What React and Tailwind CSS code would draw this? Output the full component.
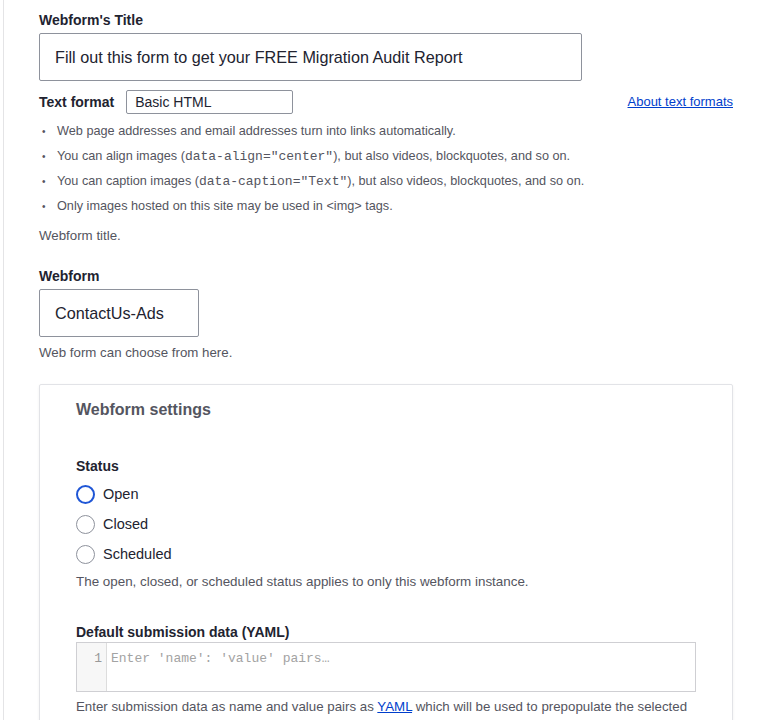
import React from 'react'

const sans = { fontFamily: '"Liberation Sans", Arial, sans-serif' }
const mono = { fontFamily: '"Liberation Mono", "Courier New", monospace' }

function Radio({ label, focused }) {
  return (
    <label className="flex items-center h-[30px] gap-[8px] text-[14.5px] text-[#222330]">
      <span
        className={
          focused
            ? 'w-[19px] h-[19px] rounded-full border-2 border-[#1f56d6] bg-white'
            : 'w-[19px] h-[19px] rounded-full border border-[#8e929c] bg-white'
        }
      />
      <span>{label}</span>
    </label>
  )
}

const Bullet = ({ children }) => (
  <li className="flex items-center h-[25px] text-[12.7px] text-[#545560]">
    <span className="w-[18px] pl-[3px] text-[10px] text-[#545560]">•</span>
    <span>{children}</span>
  </li>
)

const Code = ({ children }) => (
  <code className="text-[13px] text-[#545560]" style={mono}>
    {children}
  </code>
)

export default function App() {
  return (
    <div className="min-h-screen bg-white ml-[3px] border-l border-[#e4e4e6]" style={sans}>
      <div className="pl-[35px] pr-[34px] pt-[11px]">
        {/* Title */}
        <div className="text-[14px] font-bold text-[#222330] leading-[18px]">Webform's Title</div>
        <div className="mt-[4px] w-[543px] h-[48px] border border-[#8e929c] rounded-[2px] flex items-center px-[15px] text-[16.2px] text-[#222330]">
          Fill out this form to get your FREE Migration Audit Report
        </div>

        {/* Text format */}
        <div className="mt-[9px] flex items-center justify-between">
          <div className="flex items-center gap-[12px]">
            <span className="text-[14px] font-bold text-[#222330]">Text format</span>
            <div className="w-[167px] h-[24px] border border-[#8e929c] rounded-[2px] flex items-center px-[8px] text-[14px] text-[#222330]">
              Basic HTML
            </div>
          </div>
          <a className="mr-[1px] text-[13px] text-[#003ecc] underline">About text formats</a>
        </div>
        <ul className="mt-[5px]">
          <Bullet>Web page addresses and email addresses turn into links automatically.</Bullet>
          <Bullet>
            You can align images (<Code>data-align="center"</Code>), but also videos, blockquotes, and so on.
          </Bullet>
          <Bullet>
            You can caption images (<Code>data-caption="Text"</Code>), but also videos, blockquotes, and so on.
          </Bullet>
          <Bullet>Only images hosted on this site may be used in &lt;img&gt; tags.</Bullet>
        </ul>
        <div className="mt-[7px] text-[13.3px] text-[#545560]">Webform title.</div>

        {/* Webform select */}
        <div className="mt-[21px] text-[14px] font-bold text-[#222330] leading-[18px]">Webform</div>
        <div className="mt-[4px] w-[160px] h-[48px] border border-[#8e929c] rounded-[2px] flex items-center px-[15px] text-[16.2px] text-[#222330]">
          ContactUs-Ads
        </div>
        <div className="mt-[6px] text-[13.3px] text-[#545560]">Web form can choose from here.</div>

        {/* Settings card */}
        <div className="mt-[21px] mr-[1px] border border-[#e2e3e7] rounded-[2px] shadow-[0_1px_3px_rgba(0,0,0,0.06)] pl-[36px] pr-[36px] pt-[15px] pb-[20px]">
          <div className="text-[16px] font-bold text-[#545560] leading-[20px]">Webform settings</div>

          <div className="mt-[37px] text-[14px] font-bold text-[#222330] leading-[18px]">Status</div>
          <div className="mt-[5px]">
            <Radio label="Open" focused />
            <Radio label="Closed" />
            <Radio label="Scheduled" />
          </div>
          <div className="mt-[2px] text-[13.4px] text-[#545560]">
            The open, closed, or scheduled status applies to only this webform instance.
          </div>

          <div className="mt-[31px] text-[14px] font-bold text-[#222330] leading-[18px]">Default submission data (YAML)</div>
          <div className="mt-[1px] flex h-[50px] border border-[#cfcfd3]">
            <div
              className="w-[30px] bg-[#f7f7f7] border-r border-[#dddddd] text-right pr-[4px] pt-[6px] text-[13px] text-[#999999]"
              style={mono}
            >
              1
            </div>
            <div className="pl-[4px] pt-[6px] text-[13px] text-[#a3a3a3]" style={mono}>
              Enter 'name': 'value' pairs…
            </div>
          </div>
          <div className="mt-[5px] text-[13.3px] text-[#545560] leading-[20px]">
            Enter submission data as name and value pairs as <a className="text-[#003ecc] underline">YAML</a> which will be used to prepopulate the selected webform. <a className="text-[#003ecc] underline">You may use tokens</a>.
          </div>
        </div>
      </div>
    </div>
  )
}
